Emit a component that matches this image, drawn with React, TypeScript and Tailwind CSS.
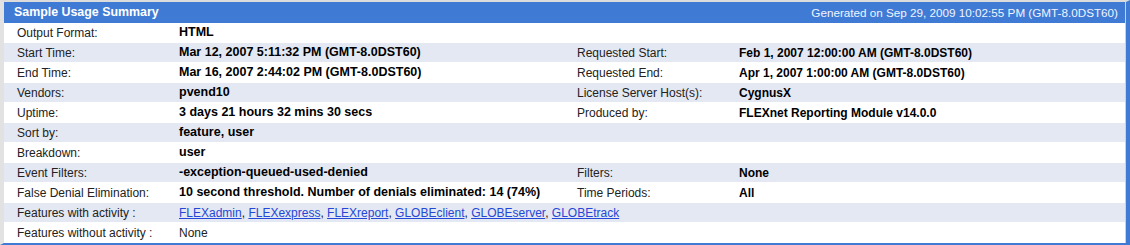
import React from "react";

type Row = {
  label: string;
  value: React.ReactNode;
  label2?: string;
  value2?: string;
  plain?: boolean;
};

const features = ["FLEXadmin", "FLEXexpress", "FLEXreport", "GLOBEclient", "GLOBEserver", "GLOBEtrack"];

const rows: Row[] = [
  { label: "Output Format:", value: "HTML" },
  { label: "Start Time:", value: "Mar 12, 2007 5:11:32 PM (GMT-8.0DST60)", label2: "Requested Start:", value2: "Feb 1, 2007 12:00:00 AM (GMT-8.0DST60)" },
  { label: "End Time:", value: "Mar 16, 2007 2:44:02 PM (GMT-8.0DST60)", label2: "Requested End:", value2: "Apr 1, 2007 1:00:00 AM (GMT-8.0DST60)" },
  { label: "Vendors:", value: "pvend10", label2: "License Server Host(s):", value2: "CygnusX" },
  { label: "Uptime:", value: "3 days 21 hours 32 mins 30 secs", label2: "Produced by:", value2: "FLEXnet Reporting Module v14.0.0" },
  { label: "Sort by:", value: "feature, user" },
  { label: "Breakdown:", value: "user" },
  { label: "Event Filters:", value: "-exception-queued-used-denied", label2: "Filters:", value2: "None" },
  { label: "False Denial Elimination:", value: "10 second threshold. Number of denials eliminated: 14 (74%)", label2: "Time Periods:", value2: "All" },
  {
    label: "Features with activity :",
    plain: true,
    value: (
      <span className="whitespace-nowrap">
        {features.map((f, i) => (
          <span key={f}>
            <a href="#" className="text-[#2347d6] underline">{f}</a>
            {i < features.length - 1 ? ", " : ""}
          </span>
        ))}
      </span>
    ),
  },
  { label: "Features without activity :", value: "None", plain: true },
];

export default function App() {
  return (
    <div className="w-[1130px] h-[245px] bg-white font-['Liberation_Sans',Arial,sans-serif] text-[12px] text-[#222]">
      <div className="h-full border-t-2 border-l-4 border-r-4 border-b-2 border-t-[#dcdcdc] border-l-[#e2e2e2] border-r-[#3f7bd5] border-b-[#3f7bd5]">
        <div className="h-full border-r border-[#d0d0d0]">
          {/* Header */}
          <div className="h-[21px] bg-[#3f7bd5] flex items-center justify-between pl-[10px] pr-[7px] text-white">
            <span className="font-bold text-[12.4px]">Sample Usage Summary</span>
            <span className="text-[11.7px] text-[#f0f4ff]">Generated on Sep 29, 2009 10:02:55 PM (GMT-8.0DST60)</span>
          </div>

          {rows.map((r, i) => (
            <div
              key={r.label}
              className={`h-[20px] grid grid-cols-[175px_398px_162px_1fr] items-center border-b border-white ${i % 2 === 1 ? "bg-[#e3e8f3]" : "bg-white"}`}
            >
              <span className="pl-[13px] whitespace-nowrap">{r.label}</span>
              <span className={`whitespace-nowrap ${r.plain ? "" : "font-bold text-black text-[12.5px]"}`}>{r.value}</span>
              <span className="whitespace-nowrap">{r.label2 ?? ""}</span>
              <span className="whitespace-nowrap font-bold text-black">{r.value2 ?? ""}</span>
            </div>
          ))}
        </div>
      </div>
    </div>
  );
}
